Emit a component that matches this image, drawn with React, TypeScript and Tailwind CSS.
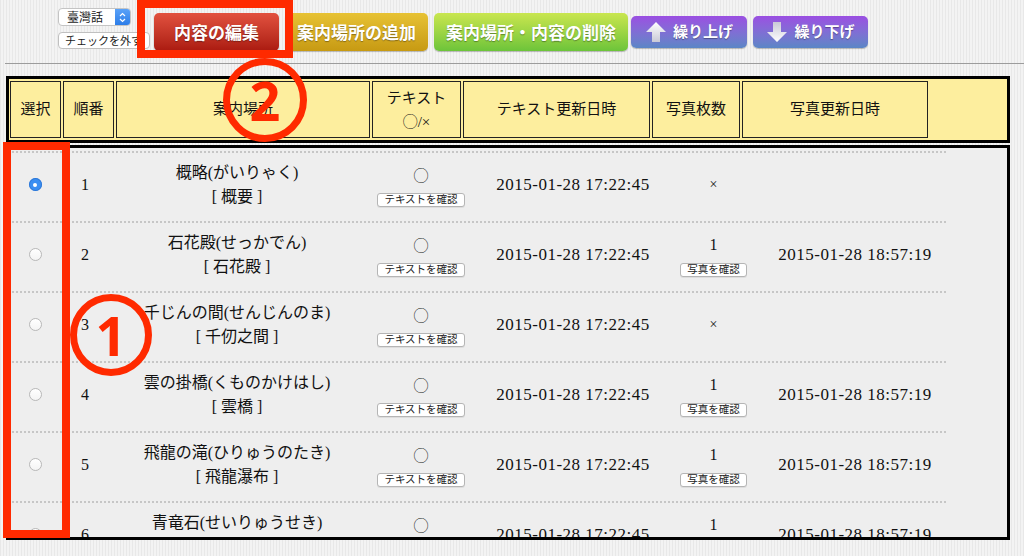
const serif = "font-['Liberation_Serif','Noto_Sans_CJK_JP',serif]"
const sans = "font-['Noto_Sans_CJK_JP','Noto_Sans',sans-serif]"

const rows = [
  { no: 1, name: '概略(がいりゃく)', sub: '概要', photo: '', photoDate: '' },
  { no: 2, name: '石花殿(せっかでん)', sub: '石花殿', photo: '1', photoDate: '2015-01-28 18:57:19' },
  { no: 3, name: '千じんの間(せんじんのま)', sub: '千仞之間', photo: '', photoDate: '' },
  { no: 4, name: '雲の掛橋(くものかけはし)', sub: '雲橋', photo: '1', photoDate: '2015-01-28 18:57:19' },
  { no: 5, name: '飛龍の滝(ひりゅうのたき)', sub: '飛龍瀑布', photo: '1', photoDate: '2015-01-28 18:57:19' },
  { no: 6, name: '青竜石(せいりゅうせき)', sub: '青竜石', photo: '1', photoDate: '2015-01-28 18:57:19' },
]

function Radio({ checked }: { checked?: boolean }) {
  if (checked) {
    return (
      <div className="flex h-[13px] w-[13px] items-center justify-center rounded-full bg-[#3a8ef2] shadow-[inset_0_0_0_1px_#2f78d6]">
        <div className="h-[4px] w-[4px] rounded-full bg-white" />
      </div>
    )
  }
  return <div className="h-[13px] w-[13px] rounded-full border border-[#b8b8b8] bg-gradient-to-b from-white to-[#f4f4f4]" />
}

function SmallBtn({ children }: { children: string }) {
  return (
    <div className={`${sans} mt-[6px] flex h-[14px] items-center rounded-[3px] border border-[#b5b5b5] bg-white px-[6px] text-[10.5px] leading-none text-[#222] shadow-[0_1px_0_#ddd]`}>
      {children}
    </div>
  )
}

function Arrow({ down }: { down?: boolean }) {
  return (
    <svg width="22" height="22" viewBox="0 0 22 22" className={down ? 'rotate-180' : ''}>
      <defs>
        <linearGradient id={down ? 'ad' : 'au'} x1="0" y1="0" x2="0" y2="1">
          <stop offset="0" stopColor="#ffffff" />
          <stop offset="1" stopColor="#c9c9d6" />
        </linearGradient>
      </defs>
      <path d="M11 1 L21 11 L15 11 L15 21 L7 21 L7 11 L1 11 Z" fill={`url(#${down ? 'ad' : 'au'})`} />
    </svg>
  )
}

function TopButton({ children, cls }: { children: React.ReactNode; cls: string }) {
  return (
    <div className={`${sans} flex items-center justify-center rounded-[5px] font-bold text-white [text-shadow:0_1px_1px_rgba(0,0,0,0.35)] shadow-[0_1px_1px_rgba(0,0,0,0.25)] ${cls}`}>
      {children}
    </div>
  )
}

export default function App() {
  return (
    <div className="relative h-[556px] w-[1024px] overflow-hidden bg-[#efefef] bg-[repeating-linear-gradient(90deg,#e8e8e8_0px,#e8e8e8_1px,#f3f3f3_1px,#f3f3f3_3px)]">
      {/* toolbar */}
      <div className="flex h-[63px] items-center pl-[58px]">
        <div className="flex w-[92px] flex-col gap-[6px] self-start pt-[8px]">
          <div className={`${sans} flex h-[18px] w-[73px] items-center overflow-hidden rounded-[4px] border border-[#c4c4c4] bg-white text-[12px] text-[#222]`}>
            <span className="flex-1 pl-[8px] leading-none">臺灣話</span>
            <div className="flex h-full w-[15px] flex-col items-center justify-center bg-gradient-to-b from-[#5aa2f8] to-[#2c7de8]">
              <svg width="7" height="11" viewBox="0 0 7 11">
                <path d="M1 4 L3.5 1.5 L6 4 M1 7 L3.5 9.5 L6 7" stroke="white" strokeWidth="1.2" fill="none" />
              </svg>
            </div>
          </div>
          <div className={`${sans} flex h-[17px] w-[92px] items-center rounded-[4px] border border-[#c0c0c0] bg-white pl-[6px] text-[11px] leading-none text-[#222]`}>
            チェックを外す
          </div>
        </div>
        <div className="ml-[4px] flex items-center gap-[6px]">
          <TopButton cls="h-[38px] w-[125px] text-[17px] bg-gradient-to-b from-[#e2513f] to-[#ab1a10]">内容の編集</TopButton>
          <TopButton cls="h-[38px] w-[143px] text-[17px] bg-gradient-to-b from-[#e7c233] to-[#c79a12]">案内場所の追加</TopButton>
          <TopButton cls="h-[38px] w-[194px] text-[17px] bg-gradient-to-b from-[#c9e64f] to-[#6cc43a]">案内場所・内容の削除</TopButton>
          <div className="-ml-[3px] flex gap-[6px]">
            <TopButton cls="h-[32px] w-[116px] gap-[6px] text-[15px] bg-gradient-to-b from-[#9a4ee2] to-[#5a86c6]">
              <Arrow />
              <span>繰り上げ</span>
            </TopButton>
            <TopButton cls="h-[32px] w-[115px] gap-[6px] text-[15px] bg-gradient-to-b from-[#9a4ee2] to-[#5a86c6]">
              <Arrow down />
              <span>繰り下げ</span>
            </TopButton>
          </div>
        </div>
      </div>
      <div className="ml-[5px] h-px bg-[#9c9c9c]" />

      {/* header */}
      <div className={`${serif} ml-[6px] mt-[12px] flex w-[1004px] gap-[2px] border-[3px] border-black bg-[#fdee9e] px-[1px] py-[2px] text-[15px] text-[#111]`}>
        <div className="flex h-[57px] w-[51px] items-center justify-center border border-[#222]">選択</div>
        <div className="flex h-[57px] w-[51px] items-center justify-center border border-[#222]">順番</div>
        <div className="flex h-[57px] w-[254px] items-center justify-center border border-[#222]">案内場所</div>
        <div className="flex h-[57px] w-[89px] flex-col items-center justify-center border border-[#222] leading-[24px]">
          <span>テキスト</span>
          <span>◯/×</span>
        </div>
        <div className="flex h-[57px] w-[187px] items-center justify-center border border-[#222]">テキスト更新日時</div>
        <div className="flex h-[57px] w-[88px] items-center justify-center border border-[#222]">写真枚数</div>
        <div className="flex h-[57px] w-[186px] items-center justify-center border border-[#222]">写真更新日時</div>
      </div>

      {/* body */}
      <div className={`${serif} ml-[6px] mt-[2px] h-[395px] w-[1004px] overflow-hidden border-[3px] border-black bg-[#eeeeee] pt-[3px] text-[16px] text-[#111]`}>
        {rows.map((r) => (
          <div key={r.no} className="flex h-[70px] w-[937px] items-center border-t-2 border-dotted border-[#c6c6c6] pb-[5px]">
            <div className="flex w-[52px] justify-center">
              <Radio checked={r.no === 1} />
            </div>
            <div className="w-[54px] pl-[20px]">{r.no}</div>
            <div className="w-[244px] text-center leading-[24px]">
              <div>{r.name}</div>
              <div>[ {r.sub} ]</div>
            </div>
            <div className="flex w-[124px] flex-col items-center">
              <div className={`${sans} text-[15px] leading-[24px]`}>◯</div>
              <SmallBtn>テキストを確認</SmallBtn>
            </div>
            <div className="w-[180px] text-center text-[17px] tracking-[0.5px]">2015-01-28 17:22:45</div>
            <div className="flex w-[101px] flex-col items-center">
              {r.photo ? (
                <>
                  <div className="leading-[24px]">{r.photo}</div>
                  <SmallBtn>写真を確認</SmallBtn>
                </>
              ) : (
                <div className="text-[14px]">×</div>
              )}
            </div>
            <div className="w-[182px] text-center text-[17px] tracking-[0.5px]">{r.photoDate}</div>
          </div>
        ))}
      </div>

      {/* annotations */}
      <div className="absolute left-[137px] top-0 h-[58px] w-[156px] border-[8px] border-[#ff2a00]" />
      <div className="absolute left-[3px] top-[142px] h-[396px] w-[67px] border-[8px] border-[#ff2a00]" />
      <div className="absolute left-[223px] top-[58px] flex h-[84px] w-[84px] items-center justify-center rounded-full border-[7px] border-[#ff2a00]">
        <span className="font-['Noto_Sans',sans-serif] text-[54px] font-bold leading-none text-[#ff2a00]">2</span>
      </div>
      <div className="absolute left-[70px] top-[294px] flex h-[82px] w-[82px] items-center justify-center rounded-full border-[7px] border-[#ff2a00]">
        <span className="font-['Noto_Sans',sans-serif] text-[54px] font-bold leading-none text-[#ff2a00]">1</span>
      </div>
    </div>
  )
}
